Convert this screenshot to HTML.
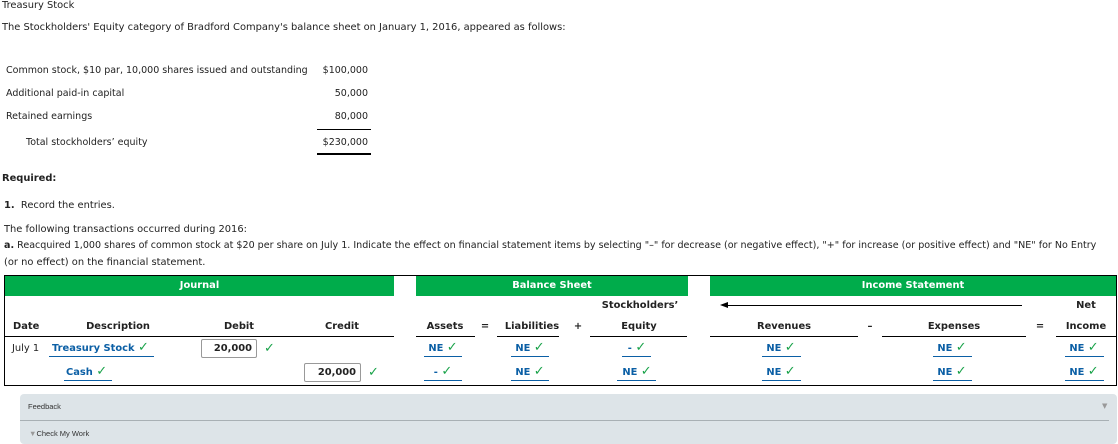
<!DOCTYPE html>
<html><head><meta charset="utf-8"><style>
body{margin:0;width:1118px;height:438px;background:#fff;position:relative;overflow:hidden;font-family:"DejaVu Sans","Liberation Sans",sans-serif;font-size:9.9px;color:#222}
.t{position:absolute;white-space:nowrap;line-height:12px}
.b{font-weight:bold}
.c{transform:translateX(-50%)}
.r{text-align:right}
.ln{position:absolute;background:#000;height:1px}
.g{position:absolute;background:#00ac4b;height:20px;top:276px;color:#fff;font-weight:bold;text-align:center;line-height:20px;font-size:9.9px}
.bl{color:#0b5fa5;font-weight:bold}
.ck{color:#1aa34a;font-weight:bold;font-size:13px;line-height:12px}
.u{position:absolute;height:1px;background:#0b5fa5}
.in{position:absolute;border:1px solid #999;border-radius:2px;background:#fff;text-align:right;font-weight:bold;line-height:18px;padding-right:4px;box-sizing:border-box;height:19px}
.s{font-size:9.5px}
</style></head><body>
<div class="t" style="left:2px;top:0">Treasury Stock</div>
<div class="t" style="left:2px;top:22px">The Stockholders' Equity category of Bradford Company's balance sheet on January 1, 2016, appeared as follows:</div>
<div class="t s" style="left:6px;top:65px">Common stock, $10 par, 10,000 shares issued and outstanding</div>
<div class="t r s" style="left:290px;width:78px;top:65px">$100,000</div>
<div class="t s" style="left:6px;top:88px">Additional paid-in capital</div>
<div class="t r s" style="left:290px;width:78px;top:88px">50,000</div>
<div class="t s" style="left:6px;top:111px">Retained earnings</div>
<div class="t r s" style="left:290px;width:78px;top:111px">80,000</div>
<div class="ln" style="left:317px;width:54px;top:129px"></div>
<div class="t s" style="left:26px;top:137px">Total stockholders’ equity</div>
<div class="t r s" style="left:290px;width:78px;top:137px">$230,000</div>
<div class="ln" style="left:317px;width:54px;top:153px;height:2px"></div>
<div class="t b" style="left:2px;top:173px">Required:</div>
<div class="t" style="left:4px;top:200px"><b>1.</b>&nbsp; Record the entries.</div>
<div class="t" style="left:4px;top:224px">The following transactions occurred during 2016:</div>
<div class="t" style="left:4px;top:240px;font-size:9.55px"><b>a.</b> Reacquired 1,000 shares of common stock at $20 per share on July 1. Indicate the effect on financial statement items by selecting "–" for decrease (or negative effect), "+" for increase (or positive effect) and "NE" for No Entry</div>
<div class="t" style="left:4px;top:257px">(or no effect) on the financial statement.</div>

<div style="position:absolute;left:4px;top:275px;width:1111px;height:109px;border:1px solid #000"></div>
<div class="g" style="left:5px;width:389px">Journal</div>
<div class="g" style="left:416px;width:272px">Balance Sheet</div>
<div class="g" style="left:710px;width:406px">Income Statement</div>

<div class="t b c" style="left:640px;top:300px">Stockholders’</div>
<div class="t b c" style="left:1086px;top:300px">Net</div>
<div class="ln" style="left:726px;width:296px;top:305px"></div>
<div style="position:absolute;left:720px;top:302px;width:0;height:0;border-top:3.5px solid transparent;border-bottom:3.5px solid transparent;border-right:8px solid #000"></div>

<div class="t b" style="left:13px;top:321px">Date</div>
<div class="t b c" style="left:118px;top:321px">Description</div>
<div class="t b c" style="left:239px;top:321px">Debit</div>
<div class="t b c" style="left:342px;top:321px">Credit</div>
<div class="t b c" style="left:445px;top:321px">Assets</div>
<div class="t b c" style="left:485px;top:321px">=</div>
<div class="t b c" style="left:532px;top:321px">Liabilities</div>
<div class="t b c" style="left:578px;top:321px">+</div>
<div class="t b c" style="left:639px;top:321px">Equity</div>
<div class="t b c" style="left:784px;top:321px">Revenues</div>
<div class="t b c" style="left:870px;top:321px">–</div>
<div class="t b c" style="left:954px;top:321px">Expenses</div>
<div class="t b c" style="left:1040px;top:321px">=</div>
<div class="t b c" style="left:1086px;top:321px">Income</div>
<div class="ln" style="left:5px;width:389px;top:336px"></div>
<div class="ln" style="left:416px;width:59px;top:336px"></div>
<div class="ln" style="left:497px;width:62px;top:336px"></div>
<div class="ln" style="left:590px;width:97px;top:336px"></div>
<div class="ln" style="left:710px;width:148px;top:336px"></div>
<div class="ln" style="left:882px;width:144px;top:336px"></div>
<div class="ln" style="left:1056px;width:60px;top:336px"></div>

<div class="t" style="left:12px;top:343px">July 1</div>
<div class="t bl" style="left:52px;top:342px">Treasury Stock <span class="ck">✓</span></div>
<div class="u" style="left:49px;width:105px;top:356px"></div>
<div class="t bl" style="left:66px;top:366px">Cash <span class="ck">✓</span></div>
<div class="u" style="left:64px;width:48px;top:380px"></div>
<div class="in" style="left:201px;top:339px;width:56px">20,000</div>
<div class="t ck" style="left:264px;top:343px">✓</div>
<div class="in" style="left:304px;top:363px;width:57px">20,000</div>
<div class="t ck" style="left:368px;top:367px">✓</div>

<div class="t bl c" style="left:443px;top:342px">NE <span class="ck">✓</span></div>
<div class="u" style="left:424px;width:38px;top:356px"></div>
<div class="t bl c" style="left:443px;top:366px">- <span class="ck">✓</span></div>
<div class="u" style="left:424px;width:38px;top:380px"></div>
<div class="t bl c" style="left:530px;top:342px">NE <span class="ck">✓</span></div>
<div class="u" style="left:511px;width:38px;top:356px"></div>
<div class="t bl c" style="left:530px;top:366px">NE <span class="ck">✓</span></div>
<div class="u" style="left:511px;width:38px;top:380px"></div>
<div class="t bl c" style="left:637px;top:342px">- <span class="ck">✓</span></div>
<div class="u" style="left:622px;width:29px;top:356px"></div>
<div class="t bl c" style="left:637px;top:366px">NE <span class="ck">✓</span></div>
<div class="u" style="left:617px;width:39px;top:380px"></div>
<div class="t bl c" style="left:781px;top:342px">NE <span class="ck">✓</span></div>
<div class="u" style="left:762px;width:39px;top:356px"></div>
<div class="t bl c" style="left:781px;top:366px">NE <span class="ck">✓</span></div>
<div class="u" style="left:762px;width:39px;top:380px"></div>
<div class="t bl c" style="left:952px;top:342px">NE <span class="ck">✓</span></div>
<div class="u" style="left:933px;width:39px;top:356px"></div>
<div class="t bl c" style="left:952px;top:366px">NE <span class="ck">✓</span></div>
<div class="u" style="left:933px;width:39px;top:380px"></div>
<div class="t bl c" style="left:1084px;top:342px">NE <span class="ck">✓</span></div>
<div class="u" style="left:1065px;width:39px;top:356px"></div>
<div class="t bl c" style="left:1084px;top:366px">NE <span class="ck">✓</span></div>
<div class="u" style="left:1065px;width:39px;top:380px"></div>

<div style="position:absolute;left:20px;top:394px;width:1097px;height:50px;background:#dde4e8;border-radius:4px"></div>
<div class="t" style="left:28px;top:401px;font-family:'Liberation Sans',sans-serif;font-size:7.5px;color:#333">Feedback</div>
<div class="t" style="left:1102px;top:400px;font-size:7px;color:#999">▼</div>
<div class="ln" style="left:20px;width:1089px;top:420px;background:#a8b0b4"></div>
<div class="t" style="left:29px;top:428px;font-family:'Liberation Sans',sans-serif;font-size:7.5px;color:#333"><span style="color:#999">▼</span>Check My Work</div>
</body></html>
